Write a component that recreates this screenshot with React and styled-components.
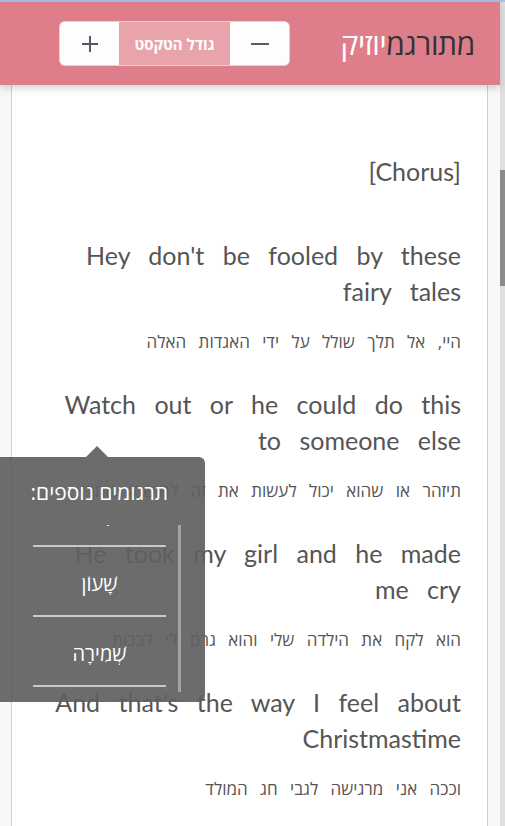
import React from 'react';
import styled, { createGlobalStyle } from 'styled-components';

const GlobalStyle = createGlobalStyle`
  html, body {
    margin: 0;
    height: 100%;
    overflow: hidden;
    background: #f8f8f8;
    font-family: "Lato", "Open Sans", "DejaVu Sans", sans-serif;
  }
  #root {
    height: 100%;
  }
`;

const Page = styled.div`
  position: relative;
  height: 100%;
  display: flex;
  flex-direction: column;
`;

const TopLine = styled.div`
  height: 2px;
  background: #a8bfe6;
  flex-shrink: 0;
`;

const Body = styled.div`
  flex: 1;
  display: flex;
  min-height: 0;
`;

const Main = styled.div`
  flex: 1;
  display: flex;
  flex-direction: column;
  min-width: 0;
`;

const Header = styled.header`
  height: 83px;
  flex-shrink: 0;
  background: #de7e8b;
  box-shadow: 0 3px 8px rgba(0, 0, 0, 0.18);
  position: relative;
  z-index: 2;
  direction: rtl;
  display: flex;
  align-items: center;
  justify-content: space-between;
  padding: 0 25px 0 60px;
`;

const Logo = styled.div`
  font-family: "Open Sans", "DejaVu Sans", sans-serif;
  font-size: 30px;
  color: #333;
  letter-spacing: -0.4px;
`;

const LogoPart = styled.span`
  color: #fff;
`;

const SizeGroup = styled.div`
  display: flex;
  flex-shrink: 0;
  height: 43px;
  border-radius: 5px;
  overflow: hidden;
  background: #fff;
  box-shadow: 0 0 0 1px rgba(255, 255, 255, 0.6);
`;

const SizeButton = styled.button`
  width: 59px;
  flex-shrink: 0;
  border: none;
  background: #fdfdfd;
  display: flex;
  align-items: center;
  justify-content: center;
  padding: 0;
  cursor: pointer;
`;

const SizeLabel = styled.div`
  width: 111px;
  flex-shrink: 0;
  background: #e9a4ab;
  color: #fff;
  font-family: "Open Sans", "DejaVu Sans", sans-serif;
  font-weight: 700;
  font-size: 15px;
  white-space: nowrap;
  display: flex;
  align-items: center;
  justify-content: center;
`;

const Content = styled.div`
  flex: 1;
  min-height: 0;
  padding: 0 12px 0 11px;
  display: flex;
`;

const Card = styled.div`
  flex: 1;
  background: #fff;
  border-left: 1px solid #cfcfcf;
  border-right: 1px solid #cfcfcf;
  padding: 68px 26px 0 40px;
  color: #555;
`;

const English = styled.p`
  margin: 0;
  font-size: 25px;
  line-height: 36px;
  text-align: right;
  word-spacing: 12px;
`;

const Section = styled(English)`
  margin-bottom: 48px;
`;

const Hebrew = styled.p`
  margin: 21px 0 32px;
  direction: rtl;
  text-align: right;
  font-family: "Open Sans", "DejaVu Sans", sans-serif;
  font-size: 17px;
  line-height: 24px;
  word-spacing: 8px;
`;

const ScrollTrack = styled.div`
  width: 5px;
  background: #dfdfdf;
  flex-shrink: 0;
`;

const ScrollThumb = styled.div`
  margin-top: 168px;
  height: 116px;
  background: #8b8b8b;
`;

const Tooltip = styled.div`
  position: absolute;
  left: 0;
  top: 457px;
  width: 205px;
  height: 245px;
  box-sizing: border-box;
  background: rgba(95, 95, 95, 0.92);
  border-radius: 0 6px 6px 0;
  padding: 20px 24px 10px 33px;
  direction: rtl;
  display: flex;
  flex-direction: column;
  z-index: 5;

  &::before {
    content: '';
    position: absolute;
    top: -11px;
    left: 86px;
    border-left: 11px solid transparent;
    border-right: 11px solid transparent;
    border-bottom: 11px solid rgba(95, 95, 95, 0.92);
  }
`;

const TooltipTitle = styled.div`
  color: #fff;
  font-family: "Open Sans", "DejaVu Sans", sans-serif;
  font-size: 21px;
  line-height: 30px;
  padding-right: 13px;
  margin-bottom: 18px;
  white-space: nowrap;
`;

const ListArea = styled.div`
  flex: 1;
  min-height: 0;
  display: flex;
  gap: 12px;
`;

const ListBar = styled.div`
  width: 3px;
  background: #a3a3a3;
  flex-shrink: 0;
`;

const List = styled.div`
  flex: 1;
  overflow: hidden;
`;

const Item = styled.div`
  height: 63px;
  padding-top: 5px;
  border-bottom: 2px solid #c9c9c9;
  color: #fff;
  font-family: "Open Sans", "DejaVu Sans", sans-serif;
  font-size: 20px;
  display: flex;
  align-items: center;
  justify-content: center;
  margin-top: ${(p) => (p.$offset ? `-${p.$offset}px` : '0')};
`;

const verses = [
  ['Hey don\'t be fooled by these fairy tales', 'היי, אל תלך שולל על ידי האגדות האלה'],
  ['Watch out or he could do this to someone else', 'תיזהר או שהוא יכול לעשות את זה למישהו אחר'],
  ['He took my girl and he made me cry', 'הוא לקח את הילדה שלי והוא גרם לי לבכות'],
  ['And that\'s the way I feel about Christmastime', 'וככה אני מרגישה לגבי חג המולד'],
];

const translations = ['זְמַן, עֵת', 'שָׁעוֹן', 'שְׁמִירָה'];

const Plus = () => (
  <svg width="20" height="20" viewBox="0 0 20 20" fill="none" stroke="#555b66" strokeWidth="2">
    <path d="M10 2v16M2 10h16" />
  </svg>
);

const Minus = () => (
  <svg width="20" height="20" viewBox="0 0 20 20" fill="none" stroke="#555b66" strokeWidth="2">
    <path d="M1 10h18" />
  </svg>
);

export default function App() {
  return (
    <>
      <GlobalStyle />
      <Page>
        <TopLine />
        <Body>
          <Main>
            <Header>
              <Logo>
                מתורגמ<LogoPart>יוזיק</LogoPart>
              </Logo>
              <SizeGroup>
                <SizeButton aria-label="הקטן טקסט"><Minus /></SizeButton>
                <SizeLabel>גודל הטקסט</SizeLabel>
                <SizeButton aria-label="הגדל טקסט"><Plus /></SizeButton>
              </SizeGroup>
            </Header>
            <Content>
              <Card>
                <Section>[Chorus]</Section>
                {verses.map(([en, he]) => (
                  <div key={en}>
                    <English>{en}</English>
                    <Hebrew>{he}</Hebrew>
                  </div>
                ))}
              </Card>
            </Content>
          </Main>
          <ScrollTrack>
            <ScrollThumb />
          </ScrollTrack>
        </Body>
        <Tooltip>
          <TooltipTitle>תרגומים נוספים:</TooltipTitle>
          <ListArea>
            <ListBar />
            <List>
              {translations.map((t, i) => (
                <Item key={t} $offset={i === 0 ? 48 : 0}>{t}</Item>
              ))}
            </List>
          </ListArea>
        </Tooltip>
      </Page>
    </>
  );
}
